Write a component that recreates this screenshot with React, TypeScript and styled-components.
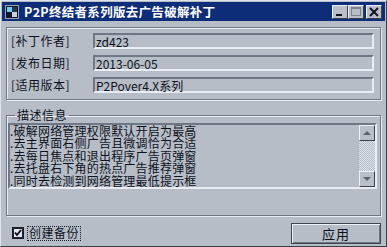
import React, { useState } from "react";
import styled, { createGlobalStyle, css } from "styled-components";

const GlobalStyle = createGlobalStyle`
    html, body {
        margin: 0;
        padding: 0;
        background: #b7bdc7;
    }
    * {
        box-sizing: border-box;
    }
`;

const FONT = `"Noto Sans CJK SC", "DejaVu Sans", sans-serif`;
const DARK = "#6f7684";
const LIGHT = "#e9edf3";
const FACE = "#b7bdc7";

const Window = styled.div`
    width: 387px;
    height: 247px;
    padding: 1px;
    display: flex;
    flex-direction: column;
    background: ${FACE};
    border: 1px solid;
    border-color: #dfe3ea #3a3e48 #3a3e48 #dfe3ea;
    font-family: ${FONT};
    color: #0c1120;
`;

const TitleBar = styled.div`
    height: 19px;
    flex-shrink: 0;
    display: flex;
    align-items: center;
    gap: 5px;
    padding: 0 3px 0 3px;
    background: #0e2d78;
`;

const Title = styled.div`
    flex: 1;
    color: #ffffff;
    font-size: 12.5px;
    font-weight: 700;
    line-height: 19px;
    letter-spacing: 0.3px;
    white-space: nowrap;
`;

const CaptionButtons = styled.div`
    display: flex;
`;

const CaptionButton = styled.div<{ $gap?: boolean }>`
    width: 16px;
    height: 14px;
    display: flex;
    align-items: center;
    justify-content: center;
    background: #b9bfc9;
    border: 1px solid;
    border-color: #eef1f6 #3c404a #3c404a #eef1f6;
    ${(p) =>
        p.$gap &&
        css`
            margin-left: 2px;
        `}
`;

const Body = styled.div`
    flex: 1;
    display: flex;
    flex-direction: column;
    padding: 6px 4px 0 4px;
`;

const InfoPanel = styled.div`
    height: 73px;
    display: flex;
    flex-direction: column;
    gap: 6px;
    padding: 5px 6px 0 4px;
    border: 1px solid ${DARK};
    box-shadow: inset 1px 1px 0 ${LIGHT}, 1px 1px 0 ${LIGHT};
`;

const Row = styled.div`
    display: flex;
    align-items: center;
    height: 16px;
`;

const Label = styled.div`
    width: 82px;
    font-size: 12px;
    line-height: 16px;
    letter-spacing: 0.5px;
    white-space: nowrap;
`;

const Field = styled.div`
    flex: 1;
    height: 16px;
    padding-left: 1px;
    font-size: 12px;
    line-height: 13px;
    border: 2px solid;
    border-color: ${DARK} ${LIGHT} ${LIGHT} ${DARK};
    white-space: nowrap;
`;

const Group = styled.fieldset`
    margin: 9px 0 0 0;
    height: 107px;
    padding: 0 3px 1px 1px;
    border: 1px solid ${DARK};
    box-shadow: inset 1px 1px 0 ${LIGHT}, 1px 1px 0 ${LIGHT};
    display: flex;
    min-width: 0;
`;

const Legend = styled.legend`
    margin-left: 7px;
    padding: 0 2px;
    font-size: 12px;
    line-height: 12px;
    letter-spacing: 0.5px;
`;

const TextBox = styled.div`
    flex: 1;
    display: flex;
    margin-top: 2px;
    border: 2px solid;
    border-color: ${DARK} ${LIGHT} ${LIGHT} ${DARK};
`;

const Lines = styled.div`
    flex: 1;
    font-size: 12px;
    line-height: 12.4px;
    letter-spacing: 0.2px;
    white-space: nowrap;
`;

const ScrollBar = styled.div`
    width: 16px;
    display: flex;
    flex-direction: column;
`;

const ScrollButton = styled.div`
    width: 16px;
    height: 16px;
    display: flex;
    align-items: center;
    justify-content: center;
    background: #b9bfc9;
    border: 1px solid;
    border-color: #eef1f6 #3c404a #3c404a #eef1f6;
`;

const Track = styled.div`
    flex: 1;
    background: repeating-conic-gradient(#dde2ea 0% 25%, #b7bdc7 0% 50%) 0 0 / 2px 2px;
`;

const Footer = styled.div`
    display: flex;
    align-items: center;
    justify-content: space-between;
    margin-top: 7px;
    height: 20px;
`;

const Check = styled.label`
    display: flex;
    align-items: center;
    gap: 4px;
    margin-left: 6px;
    cursor: pointer;
    user-select: none;
`;

const Box = styled.span`
    width: 12px;
    height: 12px;
    display: flex;
    align-items: center;
    justify-content: center;
    background: #e4e8ee;
    border: 2px solid #1a1f2c;
`;

const CheckText = styled.span`
    font-size: 12px;
    line-height: 12px;
    padding: 0 1px 1px 1px;
    letter-spacing: 0.5px;
    outline: 1px dotted #1a1f2c;
`;

const ApplyButton = styled.button`
    width: 90px;
    height: 21px;
    font-family: ${FONT};
    font-size: 13px;
    letter-spacing: 1px;
    color: #0c1120;
    background: ${FACE};
    border: 1px solid #40444e;
    box-shadow: inset 1px 1px 0 #eef1f6, inset -1px -1px 0 #6f7684;
    padding: 0;
`;

const lines = [
    ".破解网络管理权限默认开启为最高",
    ".去主界面右侧广告且微调恰为合适",
    ".去每日焦点和退出程序广告页弹窗",
    ".去托盘右下角的热点广告推荐弹窗",
    ".同时去检测到网络管理最低提示框",
];

function AppIcon() {
    return (
        <svg width="14" height="14" viewBox="0 0 14 14">
            <rect x="0" y="0" width="14" height="14" fill="#9aa2b0" />
            <rect x="1" y="1" width="12" height="12" fill="#101828" />
            <rect x="2" y="2" width="5" height="5" fill="#6fd0f0" />
            <rect x="7" y="7" width="5" height="5" fill="#c8d0dc" />
            <rect x="7" y="2" width="5" height="5" fill="#2a3448" />
        </svg>
    );
}

export default function App() {
    const [backup, setBackup] = useState(true);
    return (
        <>
            <GlobalStyle />
            <Window>
                <TitleBar>
                    <AppIcon />
                    <Title>P2P终结者系列版去广告破解补丁</Title>
                    <CaptionButtons>
                        <CaptionButton>
                            <svg width="10" height="10" viewBox="0 0 10 10">
                                <rect x="1" y="7" width="6" height="2" fill="#10141e" />
                            </svg>
                        </CaptionButton>
                        <CaptionButton>
                            <svg width="10" height="10" viewBox="0 0 10 10">
                                <rect x="0.5" y="0.5" width="9" height="8" fill="none" stroke="#7c8290" />
                                <rect x="1" y="1" width="8" height="1" fill="#7c8290" />
                            </svg>
                        </CaptionButton>
                        <CaptionButton $gap>
                            <svg width="10" height="10" viewBox="0 0 10 10">
                                <path d="M1 1 L9 9 M9 1 L1 9" stroke="#10141e" strokeWidth="2" />
                            </svg>
                        </CaptionButton>
                    </CaptionButtons>
                </TitleBar>
                <Body>
                    <InfoPanel>
                        <Row>
                            <Label>[补丁作者]</Label>
                            <Field>zd423</Field>
                        </Row>
                        <Row>
                            <Label>[发布日期]</Label>
                            <Field>2013-06-05</Field>
                        </Row>
                        <Row>
                            <Label>[适用版本]</Label>
                            <Field>P2Pover4.X系列</Field>
                        </Row>
                    </InfoPanel>
                    <Group>
                        <Legend>描述信息</Legend>
                        <TextBox>
                            <Lines>
                                {lines.map((l) => (
                                    <div key={l}>{l}</div>
                                ))}
                            </Lines>
                            <ScrollBar>
                                <ScrollButton>
                                    <svg width="8" height="5" viewBox="0 0 8 5">
                                        <path d="M4 0 L8 4 L0 4 Z" fill="#5c6270" />
                                    </svg>
                                </ScrollButton>
                                <Track />
                                <ScrollButton>
                                    <svg width="8" height="5" viewBox="0 0 8 5">
                                        <path d="M0 0 L8 0 L4 4 Z" fill="#5c6270" />
                                    </svg>
                                </ScrollButton>
                            </ScrollBar>
                        </TextBox>
                    </Group>
                    <Footer>
                        <Check onClick={() => setBackup(!backup)}>
                            <Box>
                                {backup && (
                                    <svg width="8" height="8" viewBox="0 0 8 8">
                                        <path d="M1 3.5 L3 6 L7 1" stroke="#10141e" strokeWidth="2" fill="none" />
                                    </svg>
                                )}
                            </Box>
                            <CheckText>创建备份</CheckText>
                        </Check>
                        <ApplyButton>应用</ApplyButton>
                    </Footer>
                </Body>
            </Window>
        </>
    );
}
